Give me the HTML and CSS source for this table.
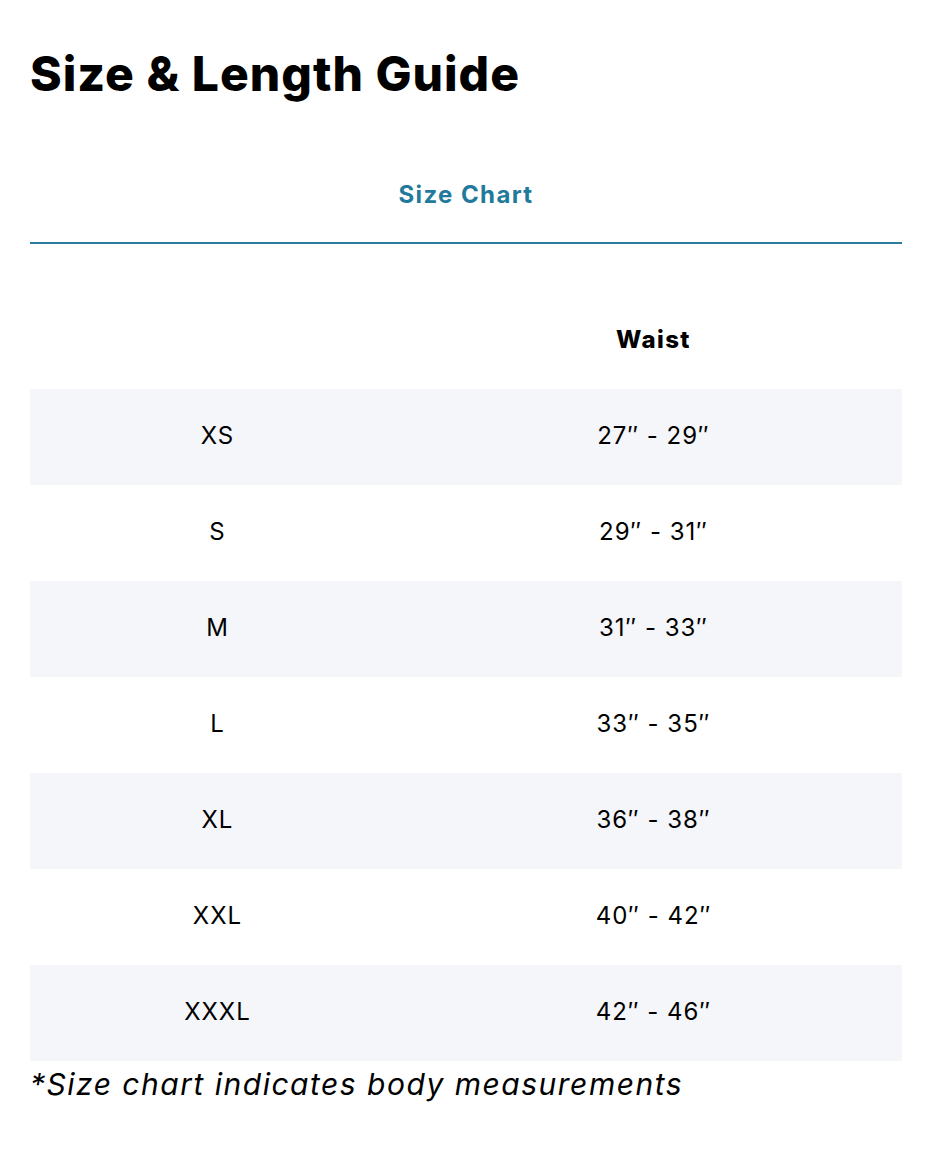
FILE: index.html
```html
<!DOCTYPE html>
<html>
<head>
<meta charset="utf-8">
<link rel="stylesheet" href="styles.css">
</head>
<body>
<div class="page">
  <h1 class="title">Size &amp; Length Guide</h1>
  <div class="tabs">
    <div class="tab active">Size Chart</div>
  </div>
  <table class="chart">
    <thead>
      <tr><th class="c1"></th><th class="c2">Waist</th></tr>
    </thead>
    <tbody>
      <tr class="alt"><td>XS</td><td>27″ - 29″</td></tr>
      <tr><td>S</td><td>29″ - 31″</td></tr>
      <tr class="alt"><td>M</td><td>31″ - 33″</td></tr>
      <tr><td>L</td><td>33″ - 35″</td></tr>
      <tr class="alt"><td>XL</td><td>36″ - 38″</td></tr>
      <tr><td>XXL</td><td>40″ - 42″</td></tr>
      <tr class="alt"><td>XXXL</td><td>42″ - 46″</td></tr>
    </tbody>
  </table>
  <p class="note">*Size chart indicates body measurements</p>
</div>
</body>
</html>
```
FILE: styles.css
```css
html, body {
  margin: 0;
  padding: 0;
  background: #fff;
}
body {
  font-family: "Inter", "Liberation Sans", sans-serif;
  color: #000;
}
.page {
  padding: 44px 30px 0 30px;
}
.title {
  margin: 0;
  font-size: 48px;
  font-weight: 800;
  line-height: 60px;
  letter-spacing: 1px;
}
.tabs {
  margin-top: 76px;
  border-bottom: 2px solid #2b7c9c;
  display: flex;
  justify-content: center;
}
.tab {
  font-size: 24px;
  font-weight: 700;
  color: #217a9c;
  padding-bottom: 32px;
  line-height: 30px;
  letter-spacing: 1.4px;
}
.chart {
  width: 100%;
  border-collapse: collapse;
  margin-top: 49px;
}
.chart th, .chart td {
  height: 96px;
  box-sizing: border-box;
  padding: 0 0 4px 0;
  text-align: center;
  vertical-align: middle;
  font-size: 24px;
  letter-spacing: 1px;
}
.chart th {
  font-weight: 800;
  letter-spacing: 1.4px;
}
.chart .c1 { width: 43%; }
.chart td { font-weight: 400; }
.chart tr.alt td { background: #f5f6fa; }
.note {
  margin: 5px 0 0 0;
  font-size: 30px;
  font-style: italic;
  line-height: 36px;
  letter-spacing: 1.5px;
}
```
